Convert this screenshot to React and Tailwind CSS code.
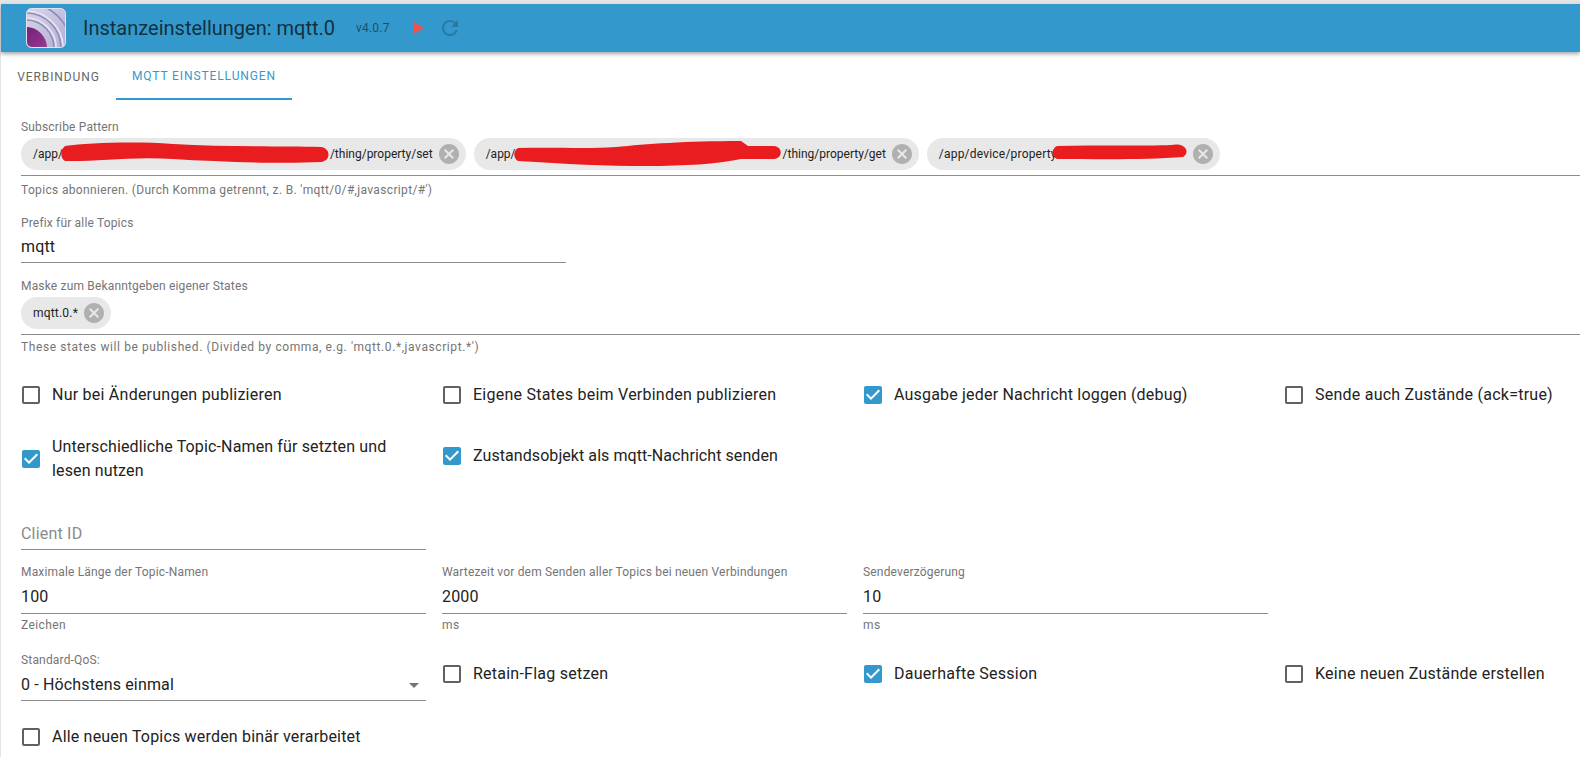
import React from "react";

const cancelPath =
  "M12 2C6.47 2 2 6.47 2 12s4.47 10 10 10 10-4.47 10-10S17.53 2 12 2zm5 13.59L15.59 17 12 13.41 8.41 17 7 15.59 10.59 12 7 8.41 8.41 7 12 10.59 15.59 7 17 8.41 13.41 12 17 15.59z";
const blankPath =
  "M19 5v14H5V5h14m0-2H5c-1.1 0-2 .9-2 2v14c0 1.1.9 2 2 2h14c1.1 0 2-.9 2-2V5c0-1.1-.9-2-2-2z";
const checkedPath =
  "M19 3H5c-1.11 0-2 .9-2 2v14c0 1.1.89 2 2 2h14c1.11 0 2-.9 2-2V5c0-1.1-.89-2-2-2zm-9 14l-5-5 1.41-1.41L10 14.17l7.59-7.59L19 8l-9 9z";

function Logo() {
  return (
    <svg width="40" height="40" viewBox="0 0 40 40" className="shrink-0">
      <defs>
        <linearGradient id="bgGrad" x1="0" y1="0" x2="1" y2="1">
          <stop offset="0" stopColor="#d8d5e8" />
          <stop offset="1" stopColor="#b3afd3" />
        </linearGradient>
        <linearGradient id="coreGrad" x1="0" y1="0" x2="1" y2="1">
          <stop offset="0" stopColor="#6a0f70" />
          <stop offset="1" stopColor="#a04a98" />
        </linearGradient>
        <clipPath id="logoClip">
          <rect x="1" y="1" width="38" height="38" rx="5" />
        </clipPath>
      </defs>
      <rect x="0.5" y="0.5" width="39" height="39" rx="5" fill="url(#bgGrad)" stroke="#e2e2f0" />
      <g clipPath="url(#logoClip)" fill="none">
        <circle cx="0" cy="40" r="30" stroke="#e4e2f0" strokeWidth="2" />
        <circle cx="0" cy="40" r="28" stroke="#8f8abb" strokeWidth="1.6" />
        <circle cx="0" cy="40" r="37" stroke="#e4e2f0" strokeWidth="2" />
        <circle cx="0" cy="40" r="35" stroke="#8f8abb" strokeWidth="1.6" />
        <circle cx="0" cy="40" r="45" stroke="#8f8abb" strokeWidth="1.6" />
        <circle cx="0" cy="40" r="21" fill="url(#coreGrad)" />
      </g>
    </svg>
  );
}

function Scribble({ width, d }) {
  return (
    <svg width={width} height="32" viewBox={`0 0 ${width} 32`} className="shrink-0 overflow-visible">
      <path d={d} fill="#e91c1f" />
    </svg>
  );
}

function Chip({ children }) {
  return (
    <div className="flex h-8 items-center rounded-2xl bg-[#e8e8e8] pl-3 pr-[5px] text-xs text-[#222]">
      {children}
      <svg width="24" height="24" viewBox="0 0 24 24" className="ml-1 fill-[#b0b0b0]">
        <path d={cancelPath} />
      </svg>
    </div>
  );
}

function Label({ children }) {
  return <div className="h-4 text-xs leading-4 tracking-[0.17px] text-[#757575]">{children}</div>;
}

function Helper({ children, className }) {
  return <div className={`h-[14px] text-xs leading-[14px] text-[#757575] ${className}`}>{children}</div>;
}

function Field({ label, value, helper, width = "w-[405px]", height = "h-[34px] pt-px" }) {
  return (
    <div className={width}>
      <Label>{label}</Label>
      <div className={`flex items-center border-b border-[#8c8c8c] text-base tracking-[0.15px] text-[#222] ${height}`}>
        {value}
      </div>
      {helper && <Helper className="mt-1 tracking-[0.4px]">{helper}</Helper>}
    </div>
  );
}

function Check({ checked, children, tracking = "tracking-[0.24px]" }) {
  return (
    <div className={`flex h-full items-center text-base leading-6 text-[#222] ${tracking}`}>
      <svg
        width="24"
        height="24"
        viewBox="0 0 24 24"
        className={`-ml-0.5 mr-[9px] shrink-0 ${checked ? "fill-[#3399cc]" : "fill-[#616161]"}`}
      >
        <path d={checked ? checkedPath : blankPath} />
      </svg>
      <span>{children}</span>
    </div>
  );
}

export default function App() {
  return (
    <div className="h-screen overflow-hidden bg-[#e4e4e4] pl-px pt-1 font-['Roboto',sans-serif]">
      <div className="h-full bg-white">
        {/* Header */}
        <header className="relative z-10 flex h-12 items-center bg-[#3399cc] pl-[25px] shadow-[0_2px_4px_rgba(0,0,0,0.35)]">
          <Logo />
          <h1 className="ml-[17px] text-xl text-[#14303f]">Instanzeinstellungen: mqtt.0</h1>
          <span className="ml-[21px] text-xs tracking-[0.2px] text-[#1f4f68]">v4.0.7</span>
          <svg width="14" height="16" viewBox="0 0 14 16" className="ml-[22px] fill-[#ef5350]">
            <path d="M1 1.5 L12 8 L1 14.5 Z" />
          </svg>
          <svg width="24" height="24" viewBox="0 0 24 24" className="ml-3 fill-[#2a7a9f]">
            <path d="M17.65 6.35C16.2 4.9 14.21 4 12 4c-4.42 0-7.99 3.58-7.99 8s3.57 8 7.99 8c3.73 0 6.84-2.55 7.73-6h-2.08c-.82 2.33-3.04 4-5.65 4-3.31 0-6-2.69-6-6s2.69-6 6-6c1.66 0 3.14.69 4.22 1.78L13 11h7V4l-2.35 2.35z" />
          </svg>
        </header>

        {/* Tabs */}
        <nav className="flex h-12 pt-px text-xs tracking-[0.9px]">
          <div className="flex w-[115px] items-center justify-center text-[#666]">VERBINDUNG</div>
          <div className="flex w-[176px] items-center justify-center border-b-2 border-[#3399cc] text-[#3399cc]">
            MQTT EINSTELLUNGEN
          </div>
        </nav>

        <main className="pl-5 pt-[19px]">
          <Label>Subscribe Pattern</Label>
          <div className="mt-[3px] flex gap-2 border-b border-[#8c8c8c] pb-[5px]">
            <Chip>
              /app/
              <Scribble
                width={267}
                d="M2 8 C25 5 70 3 110 6 C160 9 220 8 258 9 C268 10 268 23 258 24 C220 26 160 24 110 21 C70 18 30 24 2 23 C-3 20 -3 12 2 8Z"
              />
              /thing/property/set
            </Chip>
            <Chip>
              /app/
              <Scribble
                width={267}
                d="M2 10 C40 9 70 11 100 9 C130 6 170 3 225 3 L232 8 L258 8 C267 9 267 20 258 21 L225 21 C200 26 170 28 130 28 C90 28 50 26 2 23 C-3 20 -3 13 2 10Z"
              />
              /thing/property/get
            </Chip>
            <Chip>
              <span className="tracking-[0.2px]">/app/device/property</span>
              <Scribble
                width={130}
                d="M0 8 C40 7 90 8 114 7 C128 4 134 14 126 19 C90 22 40 21 0 21 C-6 18 -6 11 0 8Z"
              />
            </Chip>
          </div>
          <Helper className="mt-[7px] tracking-[0.34px]">
            Topics abonnieren. (Durch Komma getrennt, z. B. 'mqtt/0/#,javascript/#')
          </Helper>

          <div className="mt-[18px]">
            <Field label="Prefix für alle Topics" value="mqtt" width="w-[545px]" height="h-8" />
          </div>

          <div className="mt-[15px]">
            <Label>Maske zum Bekanntgeben eigener States</Label>
            <div className="mt-[3px] flex border-b border-[#8c8c8c] pb-[5px]">
              <Chip>
                <span className="tracking-[0.2px]">mqtt.0.*</span>
              </Chip>
            </div>
            <Helper className="mt-[5px] tracking-[0.59px]">
              These states will be published. (Divided by comma, e.g. 'mqtt.0.*,javascript.*')
            </Helper>
          </div>

          {/* Checkbox rows */}
          <div className="mt-[29px] grid grid-cols-[421px_421px_421px_1fr]">
            <Check checked={false}>Nur bei Änderungen publizieren</Check>
            <Check checked={false}>Eigene States beim Verbinden publizieren</Check>
            <Check checked tracking="tracking-[0.19px]">Ausgabe jeder Nachricht loggen (debug)</Check>
            <Check checked={false}>Sende auch Zustände (ack=true)</Check>
          </div>

          <div className="mt-7 grid grid-cols-[421px_421px_421px_1fr]">
            <div className="w-[390px]">
              <Check checked tracking="tracking-[0.14px]">Unterschiedliche Topic-Namen für setzten und lesen nutzen</Check>
            </div>
            <div className="pb-1.5">
              <Check checked tracking="tracking-[0.07px]">Zustandsobjekt als mqtt-Nachricht senden</Check>
            </div>
          </div>

          {/* Text fields */}
          <div className="mt-9 flex h-[31px] w-[405px] items-center border-b border-[#8c8c8c] text-base tracking-[0.2px] text-[#8a8a8a]">
            Client ID
          </div>

          <div className="mt-[14px] grid grid-cols-[421px_421px_421px_1fr]">
            <Field label="Maximale Länge der Topic-Namen" value="100" helper="Zeichen" />
            <Field label="Wartezeit vor dem Senden aller Topics bei neuen Verbindungen" value="2000" helper="ms" />
            <Field label="Sendeverzögerung" value="10" helper="ms" />
          </div>

          <div className="mt-5 grid grid-cols-[421px_421px_421px_1fr]">
            <div className="w-[405px]">
              <Label>Standard-QoS:</Label>
              <div className="flex h-[33px] items-center justify-between border-b border-[#8c8c8c] pt-px text-base tracking-[0.15px] text-[#222]">
                0 - Höchstens einmal
                <svg width="24" height="24" viewBox="0 0 24 24" className="fill-[#757575]">
                  <path d="M7 10l5 5 5-5z" />
                </svg>
              </div>
            </div>
            <div className="h-fit pt-2.5">
              <Check checked={false}>Retain-Flag setzen</Check>
            </div>
            <div className="h-fit pt-2.5">
              <Check checked>Dauerhafte Session</Check>
            </div>
            <div className="h-fit pt-2.5">
              <Check checked={false}>Keine neuen Zustände erstellen</Check>
            </div>
          </div>

          <div className="mt-6">
            <Check checked={false} tracking="tracking-[0.19px]">Alle neuen Topics werden binär verarbeitet</Check>
          </div>
        </main>
      </div>
    </div>
  );
}
